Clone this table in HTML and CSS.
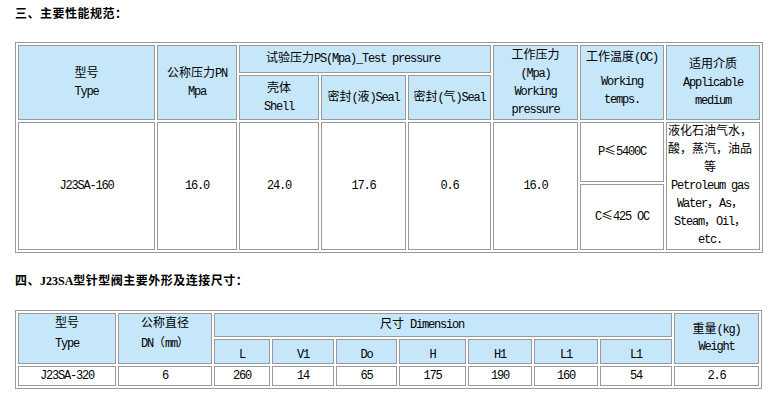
FILE: index.html
```html
<!DOCTYPE html>
<html lang="zh">
<head>
<meta charset="utf-8">
<title>J23SA</title>
<link rel="stylesheet" href="styles.css">
</head>
<body>
<div class="title">三、主要性能规范：</div>
<table class="spec t1">
  <colgroup>
    <col class="a1"><col class="a2"><col class="a3"><col class="a4"><col class="a5"><col class="a6"><col class="a7"><col class="a8">
  </colgroup>
  <tr class="r1">
    <td rowspan="2" class="hd"><span class="zh">型号</span><br>Type</td>
    <td rowspan="2" class="hd"><span class="zh">公称压力</span>PN<br>Mpa</td>
    <td colspan="3" class="hd test"><span class="zh">试验压力</span>PS(Mpa)_Test pressure</td>
    <td rowspan="2" class="hd"><span class="zh">工作压力</span><br>(Mpa)<br>Working<br>pressure</td>
    <td rowspan="2" class="hd temp"><div class="first"><span class="zh">工作温度</span>(OC)</div>Working<br>temps.</td>
    <td rowspan="2" class="hd"><span class="zh">适用介质</span><br>Applicable<br>medium</td>
  </tr>
  <tr class="r2">
    <td class="hd"><span class="zh">壳体</span><br>Shell</td>
    <td class="hd"><span class="zh">密封</span>(<span class="zh">液</span>)Seal</td>
    <td class="hd"><span class="zh">密封</span>(<span class="zh">气</span>)Seal</td>
  </tr>
  <tr class="r3">
    <td rowspan="2">J23SA-160</td>
    <td rowspan="2">16.0</td>
    <td rowspan="2">24.0</td>
    <td rowspan="2">17.6</td>
    <td rowspan="2">0.6</td>
    <td rowspan="2">16.0</td>
    <td>P<span class="zh">≤</span>5400C</td>
    <td rowspan="2" class="media"><span class="zh">液化石油气水，<br>酸，蒸汽，油品<br>等</span><br>Petroleum gas<br>Water<span class="zh">，</span>As<span class="zh">，</span><br>Steam<span class="zh">，</span>Oil<span class="zh">，</span><br>etc.</td>
  </tr>
  <tr class="r4">
    <td>C<span class="zh">≤</span>425 OC</td>
  </tr>
</table>

<div class="title title2">四、<span class="lat">J23SA</span>型针型阀主要外形及连接尺寸：</div>
<table class="spec t2">
  <colgroup>
    <col class="b1"><col class="b2"><col class="b3"><col class="b4"><col class="b5"><col class="b6"><col class="b7"><col class="b8"><col class="b9"><col class="b10">
  </colgroup>
  <tr class="s1">
    <td rowspan="2" class="hd top"><span class="zh">型号</span><br>Type</td>
    <td rowspan="2" class="hd top"><span class="zh">公称直径</span><br>DN<span class="zh">（</span>mm<span class="zh">）</span></td>
    <td colspan="7" class="hd dim"><span class="zh">尺寸</span> Dimension</td>
    <td rowspan="2" class="hd wt"><span class="zh">重量</span>(kg)<br>Weight</td>
  </tr>
  <tr class="s2">
    <td class="hd sub">L</td>
    <td class="hd sub">V1</td>
    <td class="hd sub">Do</td>
    <td class="hd sub">H</td>
    <td class="hd sub">H1</td>
    <td class="hd sub">L1</td>
    <td class="hd sub">L1</td>
  </tr>
  <tr class="s3">
    <td>J23SA-320</td>
    <td>6</td>
    <td>260</td>
    <td>14</td>
    <td>65</td>
    <td>175</td>
    <td>190</td>
    <td>160</td>
    <td>54</td>
    <td>2.6</td>
  </tr>
</table>
</body>
</html>
```

FILE: styles.css
```css
html, body {
  background: #ffffff;
}

body {
  margin: 0;
  padding: 3px 0 0 15px;
  color: #000000;
  font-family: "Noto Sans CJK SC", sans-serif;
}

.title {
  font-size: 12px;
  font-weight: 700;
  line-height: 20px;
  height: 20px;
  margin: 0 0 19px;
  letter-spacing: 0.5px;
}

.title2 {
  margin: 17px 0 20px;
}

.lat {
  font-family: "Liberation Serif", serif;
  font-weight: 700;
  letter-spacing: 0;
  line-height: 12px;
}

.spec {
  border: 1px solid #999999;
  border-spacing: 2px;
  table-layout: fixed;
  font-family: "Liberation Mono", "Noto Sans CJK SC", monospace;
  font-size: 12px;
  letter-spacing: -1.2px;
}

.t1 { width: 748px; }
.t2 { width: 747px; }

.spec td {
  border: 1px solid #999999;
  padding: 0;
  text-align: center;
  vertical-align: middle;
  line-height: 18px;
  white-space: nowrap;
  overflow: hidden;
}

.zh {
  font-family: "Noto Sans CJK SC", sans-serif;
  letter-spacing: 0;
  line-height: 12px;
}

.spec td.hd {
  background: #c6e6fa;
}

.a1 { width: 137px; }
.a2 { width: 80px; }
.a3 { width: 80px; }
.a4 { width: 85px; }
.a5 { width: 83px; }
.a6 { width: 85px; }
.a7 { width: 84px; }
.a8 { width: 94px; }

.r1 { height: 28px; }
.r2 { height: 45px; }
.r3 { height: 60px; }
.r4 { height: 65px; }

.spec td.test {
  padding-right: 24px;
}

.spec td.temp {
  vertical-align: top;
  padding-top: 3px;
}

.temp .first {
  margin-bottom: 6px;
}

.spec td.media {
  padding-right: 6px;
}

.b1 { width: 98px; }
.b2 { width: 94px; }
.b3 { width: 56px; }
.b4 { width: 62px; }
.b5 { width: 61px; }
.b6 { width: 67px; }
.b7 { width: 64px; }
.b8 { width: 64px; }
.b9 { width: 72px; }
.b10 { width: 85px; }

.s1 { height: 24px; }
.s2 { height: 25px; }
.s3 { height: 20px; }

.spec td.top {
  vertical-align: top;
  line-height: 20px;
}

.spec td.dim {
  padding-right: 42px;
}

.spec td.sub {
  vertical-align: bottom;
  line-height: 16px;
}

.spec td.wt {
  line-height: 17px;
}
```
